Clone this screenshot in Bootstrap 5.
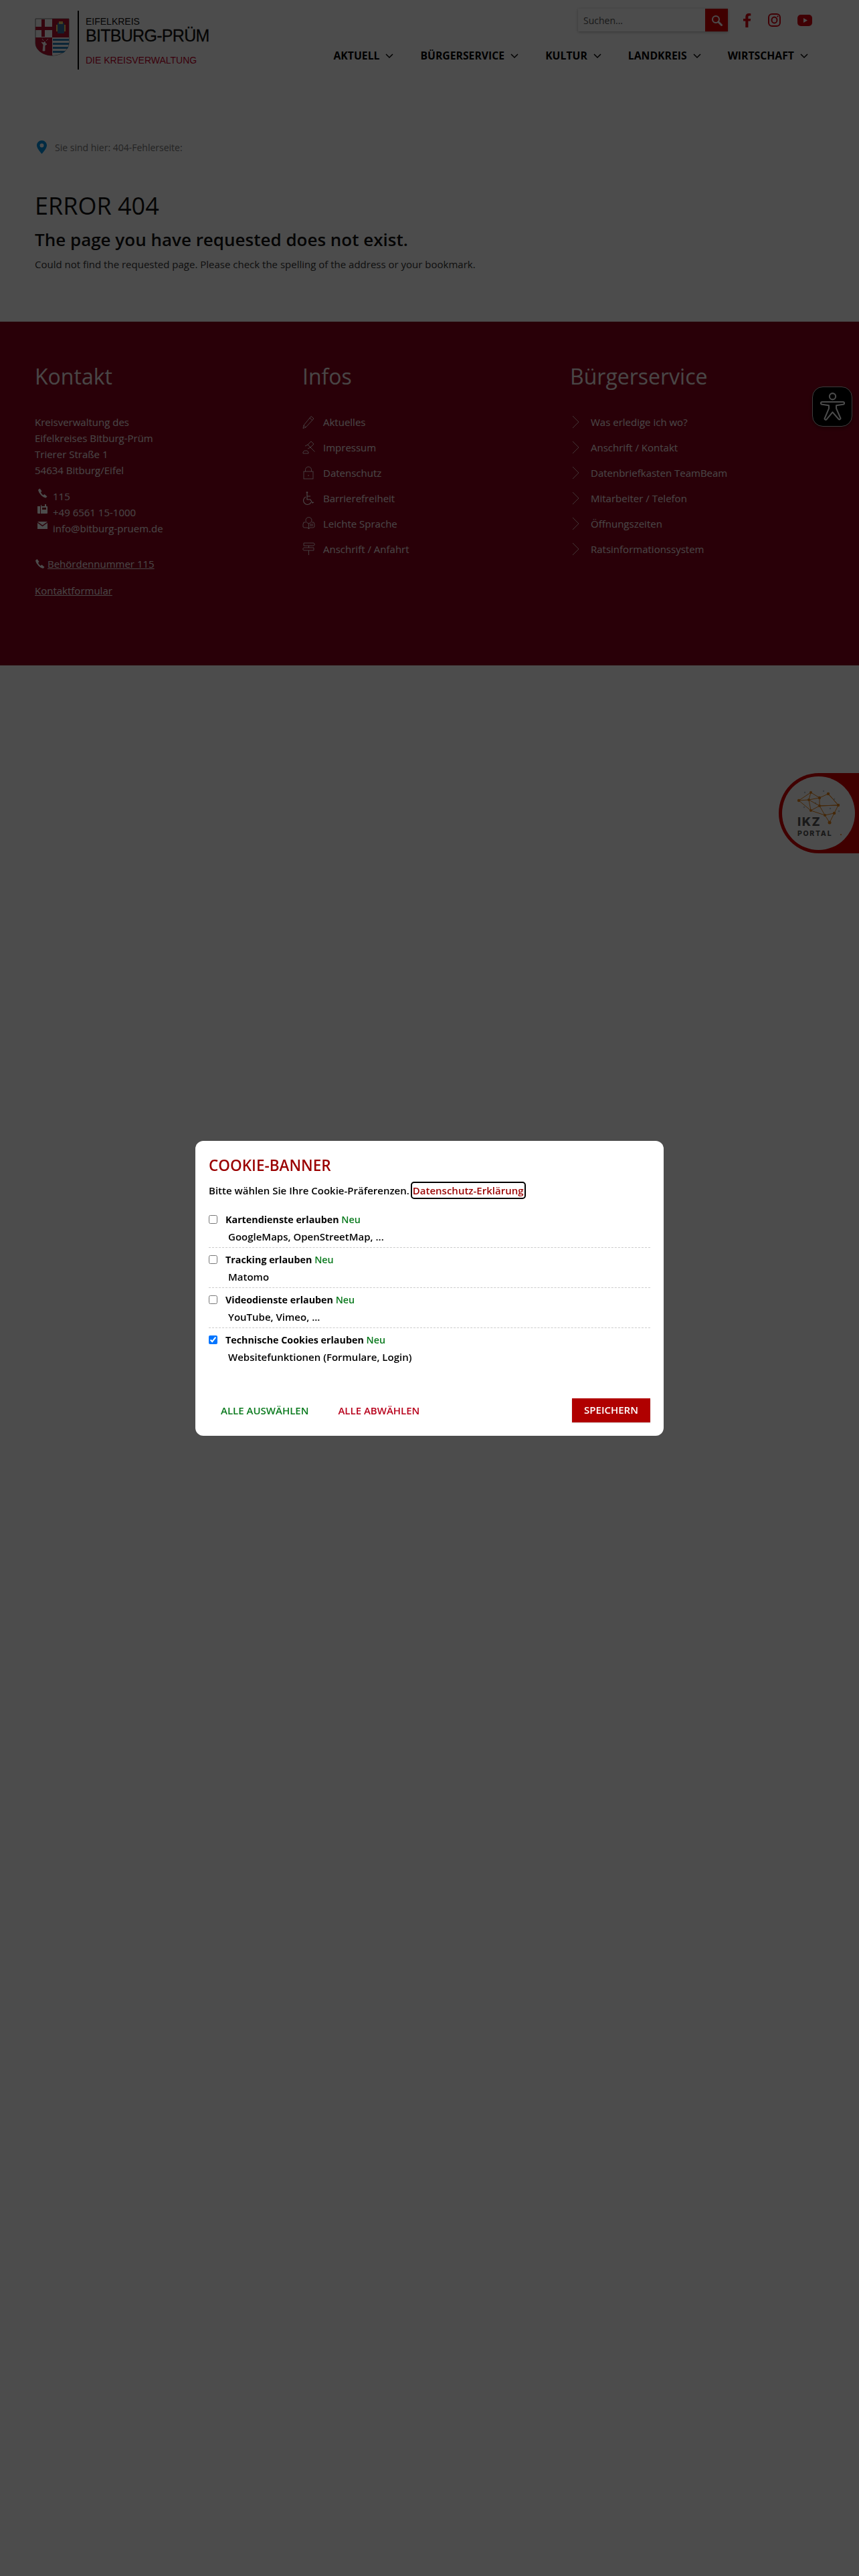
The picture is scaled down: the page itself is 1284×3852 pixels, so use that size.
<!DOCTYPE html>
<html lang="de">
<head>
<meta charset="UTF-8">
<meta name="viewport" content="width=device-width, initial-scale=1">
<title>Eifelkreis Bitburg-Prüm - Error 404</title>
<link href="https://cdn.jsdelivr.net/npm/bootstrap@5.3.0/dist/css/bootstrap.min.css" rel="stylesheet">
<script src="https://cdn.jsdelivr.net/npm/bootstrap@5.3.0/dist/js/bootstrap.bundle.min.js"></script>
<style>
body { font-family: "Open Sans", sans-serif; color: #333; background: #fff; font-size: 15px; min-height: 3852px; }
.site-wrap { width: 1200px; margin: 0 auto; padding: 0 10px; }
.site-wrap .row { --bs-gutter-x: 20px; }

.site-head { height: 206px; padding-top: 13px; }
.logo-box { height: 91px; padding-top: 3px; }
.logo-shield { width: 52px; height: 57px; margin-top: 11px; }
.logo-line { width: 2px; height: 88px; background: #000; margin: 0 10px 0 12px; }
.logo-text { font-family: "Liberation Sans", Arial, sans-serif; color: #111; line-height: 1; }
.logo-small { font-size: 14px; padding-top: 9px; }
.logo-big { font-size: 25px; margin-top: 2px; letter-spacing: -.7px; -webkit-text-stroke: .3px #111; }
.logo-red { font-size: 14px; color: #c4002a; margin-top: 17px; }
.search-box { width: 224px; height: 34px; box-shadow: 0 1px 4px rgba(0,0,0,.3); }
.search-box input { border: 0; height: 34px; padding: 0 8px; font-size: 14px; background: #fff; border-radius: 0; box-shadow: none; }
.search-box input::placeholder { color: #555; opacity: 1; }
.search-go { width: 34px; height: 34px; background: #d80000; border: 0; border-radius: 0; padding: 0; flex: none; }
.social-row { gap: 25px; margin-left: 23px; margin-right: 18px; }
.main-nav { margin-top: 24px; margin-right: 4px; }
.main-nav .nav-link { color: #000; font-size: 15.75px; font-weight: 700; padding: 0 20px; line-height: 24px; text-transform: uppercase; }
.nav-caret { width: 12px; height: 8px; margin-left: 9px; vertical-align: 1px; }

.crumb { color: #777; font-size: 14px; height: 28px; margin-bottom: 49px; margin-left: 3px; gap: 12px; }
.err-title { font-size: 36px; font-weight: 400; color: #111; margin: 0 0 5px; line-height: 50px; }
.err-sub { font-size: 26px; font-weight: 600; color: #111; margin: 0 0 5px; line-height: 40px; }
.err-text { font-size: 15px; margin: 0; line-height: 24px; height: 98px; }

.site-foot { background: #8b001c; color: #f4ecec; height: 514px; padding-top: 59px; }
.foot-head { font-size: 32px; font-weight: 400; line-height: 46px; margin: 0 0 33px; }
.foot-lines { font-size: 15px; line-height: 24px; margin: 0 0 15px; }
.foot-contact { font-size: 15px; line-height: 24px; margin-bottom: 29px; }
.foot-contact svg { width: 15px; height: 15px; margin: 0 8px 0 4px; vertical-align: 3px; }
.foot-link { color: #f4ecec; font-size: 15px; line-height: 24px; text-decoration: underline; }
.foot-list li { height: 38px; font-size: 15px; line-height: 24px; display: flex; gap: 12px; }
.foot-list svg { width: 19px; height: 20px; flex: none; margin-top: 2px; }
.foot-list a { color: #f4ecec; text-decoration: none; }

.a11y-btn { position: fixed; top: 578px; right: 10px; width: 60px; height: 60px; background: #000; border: 1px solid #ccc; border-radius: 16px; box-shadow: 0 2px 6px rgba(0,0,0,.4); }
.ikz-tab { position: fixed; top: 1156px; right: 0; width: 120px; height: 120px; background: #d80000; border-radius: 60px 0 0 60px; padding: 5px 6px 5px 5px; }
.ikz-disc { width: 109px; height: 110px; background: #fff; border-radius: 50%; display: block; }

.cookie-dlg { background: rgba(0,0,0,.7); }
.cookie-dlg .modal-dialog { max-width: 700px; width: 700px; }
.cookie-box { border: 0; border-radius: 12px; padding: 20px; height: 441px; color: #000; font-size: 15px; font-weight: 600; }
.cookie-title { font-size: 22.5px; font-weight: 600; color: #9a0000; line-height: 34px; margin: 0 0 8px; text-transform: uppercase; }
.cookie-intro { line-height: 24px; margin-bottom: 21px; }
.cookie-link { color: #9a0000; text-decoration: none; outline: 2px solid #000; border-radius: 3px; padding: 1px; }
.cookie-item { height: 53px; margin-bottom: 7px; border-bottom: 1px dashed #ccc; }
.cookie-item.last { border: 0; }
.cookie-item input { width: 13px; height: 13px; margin: 0 12px 0 0; vertical-align: -1px; }
.cookie-item .opt-name { line-height: 22px; height: 24px; font-size: 14.3px; font-weight: 700; }
.cookie-item .opt-desc { padding-left: 29px; line-height: 24px; }
.opt-new { color: #0a7a1e; font-weight: 600; }
.cookie-btns { margin-top: auto; }
.btn-all, .btn-none { font-size: 15px; font-weight: 600; border: 0; background: none; padding: 0; text-transform: uppercase; line-height: 36px; }
.btn-all { color: #0a7a1e; margin: 0 44px 0 18px; }
.btn-none { color: #b8001c; }
.btn-save { width: 117px; height: 36px; background: #b00000; color: #fff; border: 0; border-radius: 0; font-size: 15px; font-weight: 600; padding: 0; text-transform: uppercase; box-shadow: 0 1px 2px rgba(0,0,0,.15); }
</style>
</head>
<body>

<header class="site-head">
  <div class="site-wrap d-flex justify-content-between">
    <a href="#" class="logo-box d-flex text-decoration-none">
      <svg class="logo-shield" viewBox="0 0 52 57">
        <path d="M1 1h50v36c0 11-12 19-25 19S1 48 1 37z" fill="#fff" stroke="#777" stroke-width="1"/>
        <path d="M26 1h25v28H26z" fill="#b3122f"/>
        <path d="M10 2h5v11h11v5H15v10h-5V18H1v-5h9z" fill="#b3122f"/>
        <path d="M1 29h25v27C12 56 1 48 1 37z" fill="#b3122f"/>
        <path d="M27 29h24v8c0 9-10 18-24 19z" fill="#fff"/>
        <path d="M27 31h24v3H27zM27 37h24v3H27zM27 43h23l-1 3H27zM27 49h19l-3 3H27z" fill="#2a80b8"/>
        <path d="M34 7h10v16H34z" fill="#3b6f9e"/><path d="M36 5h6v4h-6z" fill="#f3d26a"/><path d="M32 10h2v10h-2zM44 10h2v10h-2z" fill="#f3d26a"/>
        <path d="M12 49l1-9 -3-4 3 1 2-2 1 3 2 1-3 2 0 8zM17 34l3-3M13 34l-2-3" fill="#fff" stroke="#fff" stroke-width=".8"/>
      </svg>
      <span class="logo-line"></span>
      <span class="logo-text d-block">
        <span class="logo-small d-block">EIFELKREIS</span>
        <span class="logo-big d-block">BITBURG-PRÜM</span>
        <span class="logo-red d-block">DIE KREISVERWALTUNG</span>
      </span>
    </a>
    <div class="d-flex flex-column align-items-end">
      <div class="d-flex align-items-center">
        <form class="search-box d-flex" onsubmit="return false">
          <input type="text" class="form-control" placeholder="Suchen...">
          <button class="search-go d-flex align-items-center justify-content-center" aria-label="Suchen">
            <svg width="17" height="17" viewBox="0 0 17 17" fill="none" stroke="#fff"><circle cx="7" cy="7" r="5" stroke-width="2"/><path d="M10.8 10.8L15.5 15.5" stroke-width="3" stroke-linecap="round"/></svg>
          </button>
        </form>
        <div class="social-row d-flex align-items-center">
          <svg width="12" height="21" viewBox="0 0 12 21" fill="#d80010"><path d="M3.3 21v-9.4H0V8h3.3V5.200C3.300 1.900 5.300 0 8.300 0c1.400 0 2.700.1 3 .2v3.300H9.300c-1.600 0-1.900.8-1.900 1.900V8h3.800l-.5 3.600H7.400V21z"/></svg>
          <svg width="19" height="20" viewBox="0 0 19 20" fill="none" stroke="#d80010" stroke-width="2"><rect x="1" y="1" width="17" height="18" rx="5"/><ellipse cx="9.500" cy="10" rx="4" ry="4.500"/><circle cx="14.500" cy="4.500" r=".7" fill="#d80010" stroke-width="1"/></svg>
          <svg width="22" height="17" viewBox="0 0 22 17"><rect width="22" height="17" rx="5" fill="#d80010"/><path d="M9 5l6 3.500L9 12z" fill="#fff"/></svg>
        </div>
      </div>
      <ul class="navbar-nav flex-row main-nav">
        <li class="nav-item"><a class="nav-link" href="#">Aktuell<svg class="nav-caret" viewBox="0 0 12 8" fill="none" stroke="#000" stroke-width="1.500"><path d="M1 1l5 5 5-5"/></svg></a></li>
        <li class="nav-item"><a class="nav-link" href="#">Bürgerservice<svg class="nav-caret" viewBox="0 0 12 8" fill="none" stroke="#000" stroke-width="1.500"><path d="M1 1l5 5 5-5"/></svg></a></li>
        <li class="nav-item"><a class="nav-link" href="#">Kultur<svg class="nav-caret" viewBox="0 0 12 8" fill="none" stroke="#000" stroke-width="1.500"><path d="M1 1l5 5 5-5"/></svg></a></li>
        <li class="nav-item"><a class="nav-link" href="#">Landkreis<svg class="nav-caret" viewBox="0 0 12 8" fill="none" stroke="#000" stroke-width="1.500"><path d="M1 1l5 5 5-5"/></svg></a></li>
        <li class="nav-item"><a class="nav-link" href="#">Wirtschaft<svg class="nav-caret" viewBox="0 0 12 8" fill="none" stroke="#000" stroke-width="1.500"><path d="M1 1l5 5 5-5"/></svg></a></li>
      </ul>
    </div>
  </div>
</header>

<main class="site-wrap">
  <div class="crumb d-flex align-items-center">
    <svg width="15" height="20" viewBox="0 0 15 20"><path fill-rule="evenodd" d="M7.500 0C3.400 0 0 3.300 0 7.400 0 12 7.500 20 7.500 20S15 12 15 7.400C15 3.300 11.600 0 7.500 0zm0 4.500a3 3 0 1 1 0 6 3 3 0 0 1 0-6z" fill="#0090e0"/></svg>
    <span>Sie sind hier: 404-Fehlerseite:</span>
  </div>
  <h1 class="err-title">ERROR 404</h1>
  <h2 class="err-sub">The page you have requested does not exist.</h2>
  <p class="err-text">Could not find the requested page. Please check the spelling of the address or your bookmark.</p>
</main>

<footer class="site-foot">
  <div class="site-wrap">
    <div class="row">
      <div class="col-4">
        <h3 class="foot-head">Kontakt</h3>
        <p class="foot-lines">Kreisverwaltung des<br>Eifelkreises Bitburg-Prüm<br>Trierer Straße 1<br>54634 Bitburg/Eifel</p>
        <div class="foot-contact">
          <div><svg viewBox="0 0 15 15" fill="#fff"><path d="M1 2.500L3.500.5l3 4-1.500 1.500c.5 1.500 2 3.500 3.500 4.500L10.500 9l4 3.500-2 2C8 14 2 8 1 2.500z"/></svg>115</div>
          <div><svg viewBox="0 0 15 15" fill="#fff"><path d="M0 3h4v11H1a1 1 0 0 1-1-1zM5 1h1v2h5V0h2v3h1a1 1 0 0 1 1 1v9a1 1 0 0 1-1 1H5zm2 4v3h6V5z"/></svg>+49 6561 15-1000</div>
          <div><svg viewBox="0 0 15 15" fill="#fff"><path d="M0 2h15L7.500 7.500zM0 3.800v9.200h15V3.800L7.500 9.300z"/></svg>info@bitburg-pruem.de</div>
        </div>
        <div class="mb-3 d-flex align-items-center"><svg width="15" height="16" viewBox="0 0 15 15" fill="#fff" class="me-1"><path d="M1 2.500L3.500.5l3 4-1.500 1.500c.5 1.500 2 3.500 3.500 4.500L10.500 9l4 3.500-2 2C8 14 2 8 1 2.500z"/></svg><a class="foot-link" href="#">Behördennummer 115</a></div>
        <a class="foot-link" href="#">Kontaktformular</a>
      </div>
      <div class="col-4">
        <h3 class="foot-head">Infos</h3>
        <ul class="foot-list list-unstyled m-0">
          <li><svg viewBox="0 0 19 20" fill="none" stroke="#fff" stroke-width=".8"><path d="M13 1.500l4 3.500L5 18l-4 1.500L2 15zM11 4l4 3.500M2 15l3 3"/></svg><a href="#">Aktuelles</a></li>
          <li><svg viewBox="0 0 19 20" fill="none" stroke="#fff" stroke-width=".8"><path d="M8 6l5-5 4 4-5 5zM10.500 8.500l8 8M4 8l4-2M8 12l4-2M1 19h8v-2l-2-2H3l-2 2z"/></svg><a href="#">Impressum</a></li>
          <li><svg viewBox="0 0 19 20" fill="none" stroke="#fff" stroke-width=".8"><rect x="2" y="8" width="14" height="11"/><path d="M4.500 8V5.500a4.500 4.500 0 0 1 9 0V8M9 13v2"/></svg><a href="#">Datenschutz</a></li>
          <li><svg viewBox="0 0 19 20" fill="none" stroke="#fff" stroke-width="1.100"><circle cx="7" cy="1.500" r=".8"/><path d="M7 3v9h5l3 5 2-1M7 7h5M5 8a6 6 0 1 0 8 8"/></svg><a href="#">Barrierefreiheit</a></li>
          <li><svg viewBox="0 0 19 20" fill="none" stroke="#fff" stroke-width=".8"><circle cx="9.500" cy="5" r="4.500"/><path d="M5 8H2L1 11v4l2 1h5l1.500 2 1.500-2h5l2-1v-4l-1-3h-3M9.500 10v8M11 11h5M11 13h5"/></svg><a href="#">Leichte Sprache</a></li>
          <li><svg viewBox="0 0 19 20" fill="none" stroke="#fff" stroke-width=".8"><path d="M2 1h15l1.500 2L17 5H2zM17 8H2L.5 10 2 12h15zM9.500 5v3M9.500 12v7"/></svg><a href="#">Anschrift / Anfahrt</a></li>
        </ul>
      </div>
      <div class="col-4">
        <h3 class="foot-head">Bürgerservice</h3>
        <ul class="foot-list list-unstyled m-0">
          <li><svg viewBox="0 0 19 20" fill="none" stroke="#fff" stroke-width=".7"><path d="M4 1l9 9-9 9"/></svg><a href="#">Was erledige ich wo?</a></li>
          <li><svg viewBox="0 0 19 20" fill="none" stroke="#fff" stroke-width=".7"><path d="M4 1l9 9-9 9"/></svg><a href="#">Anschrift / Kontakt</a></li>
          <li><svg viewBox="0 0 19 20" fill="none" stroke="#fff" stroke-width=".7"><path d="M4 1l9 9-9 9"/></svg><a href="#">Datenbriefkasten TeamBeam</a></li>
          <li><svg viewBox="0 0 19 20" fill="none" stroke="#fff" stroke-width=".7"><path d="M4 1l9 9-9 9"/></svg><a href="#">Mitarbeiter / Telefon</a></li>
          <li><svg viewBox="0 0 19 20" fill="none" stroke="#fff" stroke-width=".7"><path d="M4 1l9 9-9 9"/></svg><a href="#">Öffnungszeiten</a></li>
          <li><svg viewBox="0 0 19 20" fill="none" stroke="#fff" stroke-width=".7"><path d="M4 1l9 9-9 9"/></svg><a href="#">Ratsinformationssystem</a></li>
        </ul>
      </div>
    </div>
  </div>
</footer>

<div class="a11y-btn d-flex align-items-center justify-content-center">
  <svg width="37" height="44" viewBox="0 0 40 46" fill="none" stroke="#fff" stroke-width="2.200" stroke-linejoin="round"><circle cx="20" cy="6.500" r="5"/><path d="M3 15.500h34a1.500 1.500 0 0 1 0 4l-11 1.500v5l6.500 15a1.800 1.800 0 0 1-3 2L20 32l-9.500 11.500a1.800 1.800 0 0 1-3-2L14 26v-5L3 19.500a1.500 1.500 0 0 1 0-4z"/></svg>
</div>

<a href="#" class="ikz-tab d-block text-decoration-none">
  <svg class="ikz-disc" viewBox="0 0 109 110">
    <g fill="#b9c4cc"><circle cx="34" cy="24" r="1.200"/><circle cx="62" cy="22" r="1.200"/><circle cx="78" cy="34" r="1.200"/><circle cx="50" cy="40" r="1.200"/><circle cx="33" cy="46" r="1.200"/><circle cx="72" cy="48" r="1.200"/><circle cx="85" cy="52" r="1.200"/></g>
    <g fill="none" stroke="#e8851c" stroke-width="1"><path d="M25 36L43 24 56 32 69 26 84 43 56 44 43 51 25 36 40 35 56 32M43 24L40 35 43 51 64 58 56 44 40 35M56 32L56 44 84 43 78 55 64 58 71 69 78 55M69 26L84 43"/></g>
    <g fill="#e8851c"><circle cx="25" cy="36" r="2.200"/><circle cx="43" cy="24" r="2"/><circle cx="56" cy="32" r="2.200"/><circle cx="69" cy="26" r="2.200"/><circle cx="84" cy="43" r="2.200"/><circle cx="40" cy="35" r="2"/><circle cx="43" cy="51" r="2"/><circle cx="56" cy="44" r="2"/><circle cx="64" cy="58" r="2"/><circle cx="78" cy="55" r="2.200"/><circle cx="71" cy="69" r="2.500"/><circle cx="88" cy="87" r="1"/></g>
    <text x="23" y="74" font-family="Inter, sans-serif" font-weight="800" font-size="18" letter-spacing="1.500" fill="#555">IKZ</text>
    <text x="23" y="89" font-family="Inter, sans-serif" font-weight="800" font-size="10.500" letter-spacing="1.700" fill="#555">PORTAL</text>
  </svg>
</a>

<div class="modal d-block cookie-dlg" tabindex="-1">
  <div class="modal-dialog modal-dialog-centered">
    <div class="modal-content cookie-box">
      <h2 class="cookie-title">Cookie-Banner</h2>
      <p class="cookie-intro">Bitte wählen Sie Ihre Cookie-Präferenzen. <a class="cookie-link" href="#">Datenschutz-Erklärung</a></p>
      <div class="cookie-item">
        <div class="opt-name"><input type="checkbox">Kartendienste erlauben <span class="opt-new">Neu</span></div>
        <div class="opt-desc">GoogleMaps, OpenStreetMap, ...</div>
      </div>
      <div class="cookie-item">
        <div class="opt-name"><input type="checkbox">Tracking erlauben <span class="opt-new">Neu</span></div>
        <div class="opt-desc">Matomo</div>
      </div>
      <div class="cookie-item">
        <div class="opt-name"><input type="checkbox">Videodienste erlauben <span class="opt-new">Neu</span></div>
        <div class="opt-desc">YouTube, Vimeo, ...</div>
      </div>
      <div class="cookie-item last">
        <div class="opt-name"><input type="checkbox" checked>Technische Cookies erlauben <span class="opt-new">Neu</span></div>
        <div class="opt-desc">Websitefunktionen (Formulare, Login)</div>
      </div>
      <div class="cookie-btns d-flex align-items-center">
        <button class="btn-all">Alle auswählen</button>
        <button class="btn-none">Alle abwählen</button>
        <button class="btn-save ms-auto">Speichern</button>
      </div>
    </div>
  </div>
</div>

</body>
</html>
